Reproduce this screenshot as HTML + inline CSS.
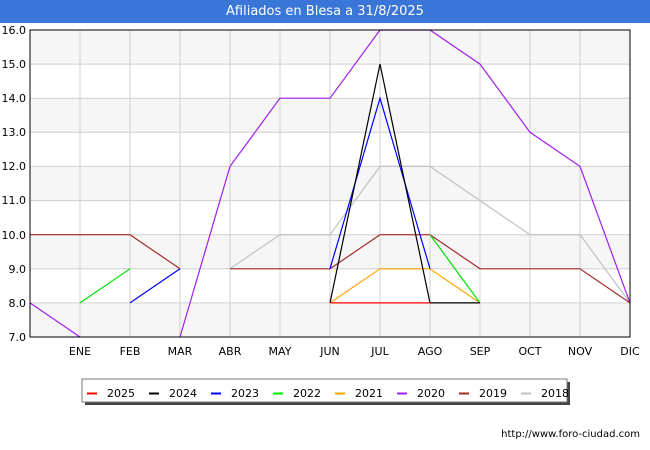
<!DOCTYPE html>
<html><head><meta charset="utf-8"><style>
body{margin:0;width:650px;height:450px;background:#fff;font-family:"DejaVu Sans","Liberation Sans",sans-serif;overflow:hidden;position:relative}
.t{position:absolute;left:0;top:0;width:650px;height:23px;background:#3a76d8;color:#fff;font-size:13px;text-align:center;line-height:23px}
</style></head><body>
<div class="t">Afiliados en Blesa a 31/8/2025</div>
<svg width="650" height="450" style="position:absolute;left:0;top:0" font-family="DejaVu Sans, Liberation Sans, sans-serif" font-size="11">
<g fill="#f6f6f6">
<rect x="30" y="30" width="600" height="34.1"/>
<rect x="30" y="98.2" width="600" height="34.1"/>
<rect x="30" y="166.4" width="600" height="34.1"/>
<rect x="30" y="234.7" width="600" height="34.1"/>
<rect x="30" y="302.9" width="600" height="34.1"/>
</g>
<g stroke="#d0d0d0" stroke-width="1">
<path d="M80 30V337M130 30V337M180 30V337M230 30V337M280 30V337M330 30V337M380 30V337M430 30V337M480 30V337M530 30V337M580 30V337"/>
<path d="M30 64.1H630M30 98.2H630M30 132.3H630M30 166.4H630M30 200.6H630M30 234.7H630M30 268.8H630M30 302.9H630"/>
</g>
<g fill="none" stroke-width="1.2">
<polyline stroke="#c0c0c0" points="230,268.8 280,234.7 330,234.7 380,166.4 430,166.4 480,200.6 530,234.7 580,234.7 630,302.9"/>
<polyline stroke="#a020f0" points="30,302.9 80,337"/>
<polyline stroke="#a020f0" points="180,337 230,166.4 280,98.2 330,98.2 380,30 430,30 480,64.1 530,132.3 580,166.4 630,302.9"/>
<polyline stroke="#a52a2a" points="30,234.7 130,234.7 180,268.8"/>
<polyline stroke="#a52a2a" points="230,268.8 330,268.8 380,234.7 430,234.7 480,268.8 580,268.8 630,302.9"/>
<polyline stroke="#ffa500" points="330,302.9 380,268.8 430,268.8 480,302.9"/>
<polyline stroke="#00e000" points="80,302.9 130,268.8"/>
<polyline stroke="#00e000" points="430,234.7 480,302.9"/>
<polyline stroke="#0000ff" points="130,302.9 180,268.8"/>
<polyline stroke="#0000ff" points="330,268.8 380,98.2 430,268.8"/>
<polyline stroke="#000" points="330,302.9 380,64.1 430,302.9 480,302.9"/>
<polyline stroke="#ff0000" points="330,302.9 430,302.9"/>
</g>
<rect x="30" y="30" width="600" height="307" fill="none" stroke="#000" stroke-width="1"/>
<g text-anchor="end" fill="#000">
<text x="26" y="34">16.0</text><text x="26" y="68">15.0</text><text x="26" y="102">14.0</text><text x="26" y="136">13.0</text><text x="26" y="170">12.0</text><text x="26" y="204">11.0</text><text x="26" y="239">10.0</text><text x="26" y="273">9.0</text><text x="26" y="307">8.0</text><text x="26" y="341">7.0</text>
</g>
<g text-anchor="middle" fill="#000">
<text x="80" y="355">ENE</text><text x="130" y="355">FEB</text><text x="180" y="355">MAR</text><text x="230" y="355">ABR</text><text x="280" y="355">MAY</text><text x="330" y="355">JUN</text><text x="380" y="355">JUL</text><text x="430" y="355">AGO</text><text x="480" y="355">SEP</text><text x="530" y="355">OCT</text><text x="580" y="355">NOV</text><text x="630" y="355">DIC</text>
</g>
<rect x="85" y="382" width="485" height="23" fill="#444"/>
<rect x="82" y="379" width="485" height="23" fill="#fff" stroke="#777"/>
<g stroke-width="2">
<path d="M87 393.5h10" stroke="#f00"/><path d="M149 393.5h10" stroke="#000"/><path d="M211 393.5h10" stroke="#00f"/><path d="M273 393.5h10" stroke="#0e0"/><path d="M335 393.5h10" stroke="#ffa500"/><path d="M397 393.5h10" stroke="#a020f0"/><path d="M459 393.5h10" stroke="#a52a2a"/><path d="M521 393.5h10" stroke="#c0c0c0"/>
</g>
<g fill="#000">
<text x="107" y="397">2025</text><text x="169" y="397">2024</text><text x="231" y="397">2023</text><text x="293" y="397">2022</text><text x="355" y="397">2021</text><text x="417" y="397">2020</text><text x="479" y="397">2019</text><text x="541" y="397">2018</text>
</g>
<text x="640" y="437" text-anchor="end" font-size="10" fill="#000">http://www.foro-ciudad.com</text>
</svg>
</body></html>
